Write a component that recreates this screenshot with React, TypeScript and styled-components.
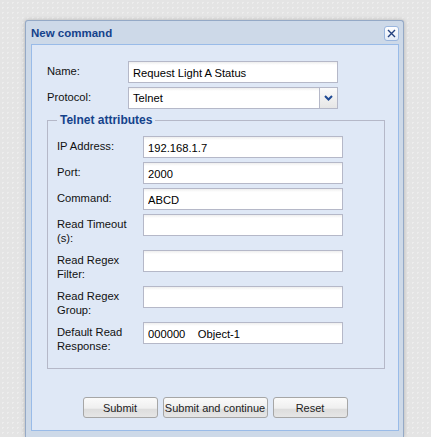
import React from "react";
import styled, { createGlobalStyle } from "styled-components";

const GlobalStyle = createGlobalStyle`
    html, body {
        margin: 0;
        padding: 0;
    }
    body {
        width: 431px;
        height: 437px;
        overflow: hidden;
        background-color: #e4e4e4;
        background-image: radial-gradient(#ededed 1px, transparent 1px);
        background-size: 5px 5px;
        font-family: "Liberation Sans", Arial, sans-serif;
    }
`;

const Window = styled.div`
    margin: 20px 0 0 25px;
    width: 379px;
    box-sizing: border-box;
    background: #cdd9e8;
    border: 1px solid #94a9c6;
    border-bottom: none;
    border-radius: 3px 3px 0 0;
    box-shadow: 0 0 4px rgba(0, 0, 0, 0.22);
    padding: 0 4px 6px 5px;
`;

const TitleBar = styled.div`
    height: 23px;
    display: flex;
    align-items: center;
    justify-content: space-between;
`;

const Title = styled.span`
    font-family: "Liberation Sans", Arial, sans-serif;
    font-weight: bold;
    font-size: 11.5px;
    color: #15428b;
    padding-top: 1px;
`;

const CloseButton = styled.button`
    width: 15px;
    height: 15px;
    padding: 0;
    margin: 2px 0 0 0;
    border: 1px solid #9ab6de;
    border-radius: 3px;
    background: linear-gradient(#ffffff, #e3ebf7);
    display: flex;
    align-items: center;
    justify-content: center;
`;

const Body = styled.div`
    background: #dfe8f6;
    border: 1px solid #99bbe8;
    padding: 16px 0 12px 15px;
`;

const FormRow = styled.div<{ $labelWidth: number }>`
    display: grid;
    grid-template-columns: ${(p) => p.$labelWidth}px auto;
    margin-bottom: 4px;
`;

const FieldLabel = styled.label`
    font-size: 11.2px;
    line-height: 14px;
    color: #111;
    padding: 3px 0 1px 0;
`;

const TextInput = styled.input<{ $width: number }>`
    display: block;
    box-sizing: border-box;
    width: ${(p) => p.$width}px;
    height: 22px;
    margin: 0;
    padding: 1px 4px 0 4px;
    border: 1px solid #b5b8c8;
    background: linear-gradient(#eeeeee 0px, #ffffff 3px, #ffffff 100%);
    font-family: "Liberation Sans", Arial, sans-serif;
    font-size: 11.2px;
    color: #000;
    outline: none;
`;

const Combo = styled.div<{ $width: number }>`
    box-sizing: border-box;
    width: ${(p) => p.$width}px;
    height: 22px;
    display: flex;
    border: 1px solid #b5b8c8;
    background: linear-gradient(#eeeeee 0px, #ffffff 3px, #ffffff 100%);
`;

const ComboText = styled.span`
    flex: 1;
    padding: 0 4px;
    font-size: 11.2px;
    line-height: 21px;
    color: #000;
`;

const ComboTrigger = styled.span`
    width: 17px;
    border-left: 1px solid #b5b8c8;
    background: linear-gradient(#fbfbfb, #e6e6e6);
    display: flex;
    align-items: center;
    justify-content: center;
`;

const FieldSet = styled.fieldset`
    box-sizing: border-box;
    width: 338px;
    margin: 1px 0 0 0;
    padding: 9px 0 10px 9px;
    border: 1px solid #b5b8c8;
`;

const Legend = styled.legend`
    font-family: "Liberation Sans", Arial, sans-serif;
    font-weight: bold;
    font-size: 12px;
    line-height: 14px;
    color: #15428b;
    padding: 0 3px;
    margin-left: 0;
`;

const ButtonBar = styled.div`
    display: flex;
    justify-content: center;
    gap: 5px;
    margin-top: 28px;
    padding-right: 15px;
`;

const Button = styled.button<{ $width: number }>`
    width: ${(p) => p.$width}px;
    height: 21px;
    padding: 0;
    border: 1px solid #a6a6a6;
    border-radius: 3px;
    background: linear-gradient(#fafafa 0%, #efefef 55%, #dcdcdc 56%, #e6e6e6 100%);
    font-family: "Liberation Sans", Arial, sans-serif;
    font-size: 11px;
    white-space: nowrap;
    color: #222;
`;

interface FieldProps {
    label: string;
    value?: string;
    labelWidth: number;
    width: number;
}

const Field = (props: FieldProps) => {
    const { label, value, labelWidth, width } = props;
    return (
        <FormRow $labelWidth={labelWidth}>
            <FieldLabel>{label}</FieldLabel>
            <div>
                <TextInput $width={width} type="text" defaultValue={value ?? ""} />
            </div>
        </FormRow>
    );
};

const CloseIcon = () => (
    <svg width="9" height="9" viewBox="0 0 9 9">
        <path d="M1 1 L8 8 M8 1 L1 8" stroke="#23417f" strokeWidth="1.4" />
    </svg>
);

const ChevronIcon = () => (
    <svg width="9" height="6" viewBox="0 0 9 6">
        <path d="M1 1 L4.5 4.5 L8 1" stroke="#1f4a94" strokeWidth="2" fill="none" />
    </svg>
);

const telnetFields = [
    { label: "IP Address:", value: "192.168.1.7" },
    { label: "Port:", value: "2000" },
    { label: "Command:", value: "ABCD" },
    { label: "Read Timeout (s):", value: "" },
    { label: "Read Regex Filter:", value: "" },
    { label: "Read Regex Group:", value: "" },
    { label: "Default Read Response:", value: "000000    Object-1" },
];

const App = () => {
    return (
        <>
            <GlobalStyle />
            <Window>
                <TitleBar>
                    <Title>New command</Title>
                    <CloseButton aria-label="Close">
                        <CloseIcon />
                    </CloseButton>
                </TitleBar>
                <Body>
                    <Field label="Name:" value="Request Light A Status" labelWidth={81} width={210} />
                    <FormRow $labelWidth={81}>
                        <FieldLabel>Protocol:</FieldLabel>
                        <Combo $width={210}>
                            <ComboText>Telnet</ComboText>
                            <ComboTrigger>
                                <ChevronIcon />
                            </ComboTrigger>
                        </Combo>
                    </FormRow>
                    <FieldSet>
                        <Legend>Telnet attributes</Legend>
                        {telnetFields.map((f) => (
                            <Field key={f.label} label={f.label} value={f.value} labelWidth={86} width={200} />
                        ))}
                    </FieldSet>
                    <ButtonBar>
                        <Button $width={75}>Submit</Button>
                        <Button $width={105}>Submit and continue</Button>
                        <Button $width={75}>Reset</Button>
                    </ButtonBar>
                </Body>
            </Window>
        </>
    );
};

export default App;
